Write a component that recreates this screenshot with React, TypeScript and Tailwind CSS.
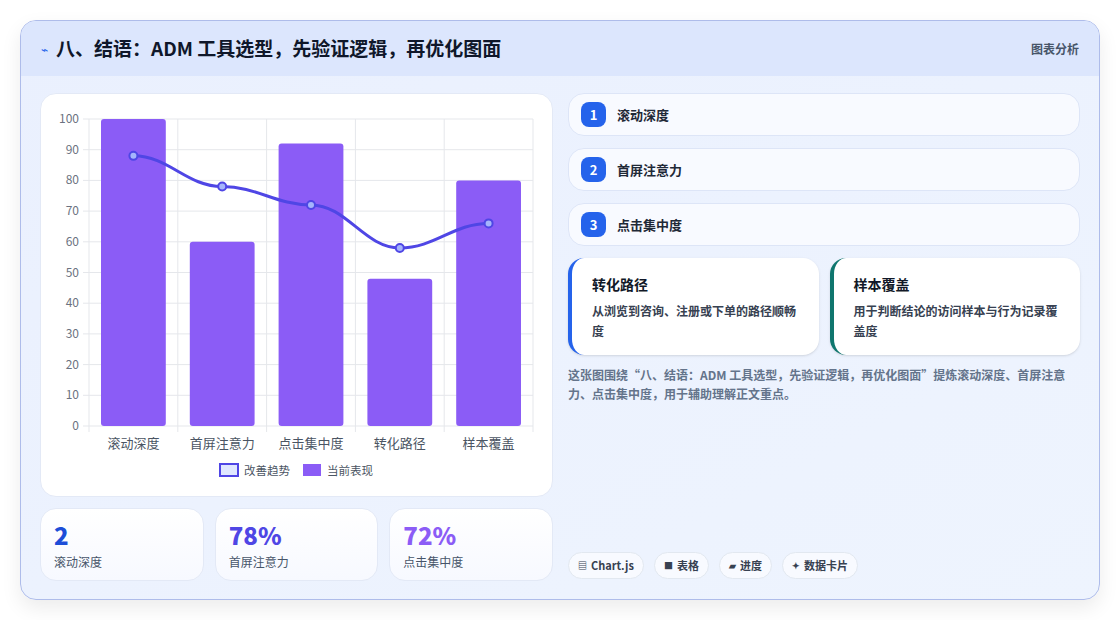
const font = { fontFamily: '"Noto Sans CJK SC", "Noto Sans", sans-serif' }

const cats = ['滚动深度', '首屏注意力', '点击集中度', '转化路径', '样本覆盖']
const bars = [100, 60, 92, 48, 80]
const line = [88, 78, 72, 58, 66]

function Chart() {
  const x0 = 48, x1 = 492, y0 = 329, y1 = 22
  const cw = (x1 - x0) / 5
  const y = (v: number) => y0 - ((y0 - y1) * v) / 100
  const pts = line.map((v, i) => [x0 + cw * i + cw / 2, y(v)])
  let d = `M${pts[0][0]},${pts[0][1]}`
  for (let i = 1; i < pts.length; i++) {
    const [ax, ay] = pts[i - 1], [bx, by] = pts[i]
    const dx = (bx - ax) * 0.4
    d += ` C${ax + dx},${ay} ${bx - dx},${by} ${bx},${by}`
  }
  return (
    <svg width="512" height="400" className="block" style={font}>
      {Array.from({ length: 11 }).map((_, i) => (
        <g key={i}>
          <line x1={x0 - 6} x2={x1} y1={y(i * 10)} y2={y(i * 10)} stroke="#e5e7eb" />
          <text x={x0 - 10} y={y(i * 10) + 4} fontSize="12" fill="#6b7280" textAnchor="end">{i * 10}</text>
        </g>
      ))}
      {Array.from({ length: 6 }).map((_, i) => (
        <line key={i} x1={x0 + cw * i} x2={x0 + cw * i} y1={y1} y2={y0 + 6} stroke="#e5e7eb" />
      ))}
      {bars.map((v, i) => (
        <rect key={i} x={x0 + cw * i + 12} y={y(v)} width={cw - 24} height={y0 - y(v)} rx="3" fill="#8b5cf6" />
      ))}
      <path d={d} fill="none" stroke="#4f46e5" strokeWidth="3" />
      {pts.map(([px, py], i) => (
        <circle key={i} cx={px} cy={py} r="4" fill="#a5b4fc" stroke="#4f46e5" strokeWidth="2" />
      ))}
      {cats.map((c, i) => (
        <text key={c} x={x0 + cw * i + cw / 2} y={351} fontSize="13" fill="#4b5563" textAnchor="middle">{c}</text>
      ))}
      <rect x="179" y="367" width="18" height="12" fill="#e0e7ff" stroke="#4f46e5" strokeWidth="2" />
      <text x="203" y="378" fontSize="11.5" fill="#4b5563">改善趋势</text>
      <rect x="262" y="367" width="18" height="12" fill="#8b5cf6" />
      <text x="286" y="378" fontSize="11.5" fill="#4b5563">当前表现</text>
    </svg>
  )
}

function Stat({ v, l, c }: { v: string; l: string; c: string }) {
  return (
    <div className="flex-1 h-[73px] rounded-2xl border border-[#e3e9f6] bg-gradient-to-b from-white to-[#f7f9ff] px-[13px] pt-[12px]">
      <div className={`text-[24px] font-extrabold leading-[28px] ${c}`}>{v}</div>
      <div className="mt-[4px] text-[12px] text-[#475569]">{l}</div>
    </div>
  )
}

function Item({ n, t }: { n: number; t: string }) {
  return (
    <div className="flex h-[43px] items-center gap-[11px] rounded-2xl border border-[#dde5f7] bg-[#f8faff] px-[12px]">
      <div className="flex h-[25px] w-[25px] items-center justify-center rounded-lg bg-[#2563eb] text-[13px] font-bold text-white">{n}</div>
      <div className="text-[13px] font-semibold text-[#1f2937]">{t}</div>
    </div>
  )
}

function Pill({ icon, t }: { icon: string; t: string }) {
  return (
    <div className="flex h-[27px] items-center gap-[4px] rounded-full border border-[#e2e8f0] bg-[#f8faff] px-[9px] text-[11px] font-semibold text-[#374151]">
      <span className="text-[9px]">{icon}</span>{t}
    </div>
  )
}

export default function App() {
  return (
    <div className="h-[620px] w-[1120px] bg-white pt-[20px] pl-[20px]" style={font}>
      <div className="flex h-[580px] w-[1080px] flex-col overflow-hidden rounded-2xl border border-[#aebcea] bg-gradient-to-br from-[#eaf0fe] to-[#eef4fe] shadow-[0_8px_20px_rgba(0,0,0,0.08)]">
        <div className="flex h-[55px] items-center justify-between bg-[#dce6fd] px-[20px]">
          <div className="flex items-center gap-[8px]">
            <span className="text-[12px] text-[#2563eb]">⌁</span>
            <span className="text-[19px] font-bold text-[#0f172a]">八、结语：ADM 工具选型，先验证逻辑，再优化图面</span>
          </div>
          <span className="text-[12px] font-semibold text-[#475569]">图表分析</span>
        </div>
        <div className="flex gap-[15px] px-[19px] pt-[17px]">
          <div className="flex w-[513px] flex-col gap-[11px]">
            <div className="h-[404px] rounded-2xl border border-[#e3e9f6] bg-white pt-[3px]">
              <Chart />
            </div>
            <div className="flex gap-[11px]">
              <Stat v="2" l="滚动深度" c="text-[#1d4ed8]" />
              <Stat v="78%" l="首屏注意力" c="text-[#4f46e5]" />
              <Stat v="72%" l="点击集中度" c="text-[#8b5cf6]" />
            </div>
          </div>
          <div className="flex w-[514px] flex-col">
            <div className="flex flex-col gap-[12px]">
              <Item n={1} t="滚动深度" />
              <Item n={2} t="首屏注意力" />
              <Item n={3} t="点击集中度" />
            </div>
            <div className="mt-[12px] flex gap-[11px]">
              <div className="h-[97px] flex-1 rounded-2xl border-l-4 border-[#2563eb] bg-white px-[20px] pt-[16px] shadow-sm">
                <div className="text-[14px] font-bold text-[#111827]">转化路径</div>
                <div className="mt-[6px] text-[12px] font-semibold leading-[20px] text-[#374151]">从浏览到咨询、注册或下单的路径顺畅度</div>
              </div>
              <div className="h-[97px] flex-1 rounded-2xl border-l-4 border-[#0f766e] bg-white px-[20px] pt-[16px] shadow-sm">
                <div className="text-[14px] font-bold text-[#111827]">样本覆盖</div>
                <div className="mt-[6px] text-[12px] font-semibold leading-[20px] text-[#374151]">用于判断结论的访问样本与行为记录覆盖度</div>
              </div>
            </div>
            <p className="mt-[10px] text-[12px] font-semibold leading-[19px] text-[#64748b]">这张图围绕“八、结语：ADM 工具选型，先验证逻辑，再优化图面”提炼滚动深度、首屏注意力、点击集中度，用于辅助理解正文重点。</p>
            <div className="mt-auto mb-[2px] flex gap-[10px]">
              <Pill icon="▤" t="Chart.js" />
              <Pill icon="■" t="表格" />
              <Pill icon="▰" t="进度" />
              <Pill icon="✦" t="数据卡片" />
            </div>
          </div>
        </div>
      </div>
    </div>
  )
}
